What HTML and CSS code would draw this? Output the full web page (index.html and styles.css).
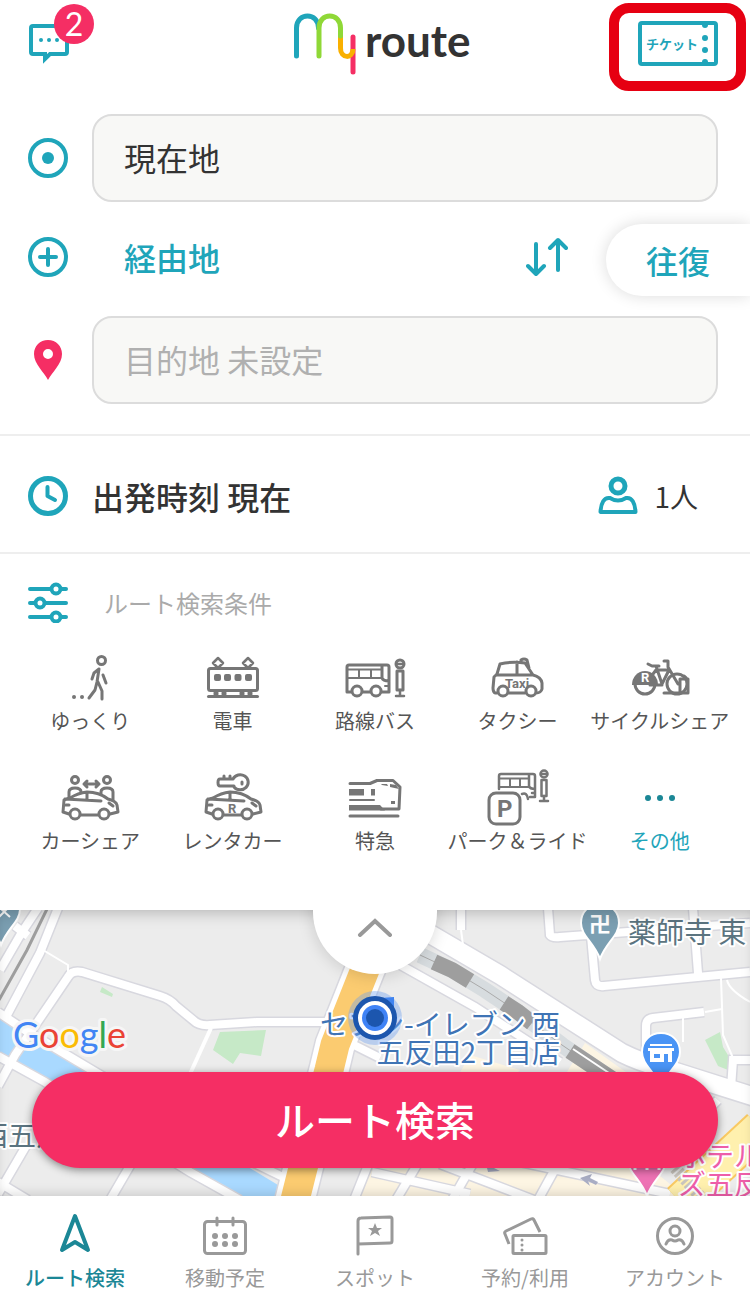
FILE: index.html
```
<!DOCTYPE html>
<html lang="ja">
<head>
  <meta charset="UTF-8" />
  <meta name="viewport" content="width=device-width" />
  <title>my route</title>
  <link rel="stylesheet" href="styles.css">
</head>
<body>
  <header class="header">
    <button class="message-btn" aria-label="お知らせ">
      <svg width="40" height="40" viewBox="0 0 40 40" fill="none" stroke="currentColor" stroke-width="4">
        <path d="M4 2H36Q38 2 38 4V28Q38 30 36 30H21L16 35V30H4Q2 30 2 28V4Q2 2 4 2Z" />
        <path d="M12 16h.01M20 16h.01M28 16h.01" stroke-linecap="round" />
      </svg>
      <span class="badge">2</span>
    </button>

    <svg class="logo" width="180" height="66" viewBox="0 0 180 66" role="img" aria-label="my route">
      <g fill="none" stroke-width="5" stroke-linecap="round">
        <path stroke="#f52e64" d="M60 26V61" />
        <path stroke="#f9b000" stroke-linecap="butt" d="M47.5 25V37C47.5 48 60 48 60 38" />
        <path stroke="#1fa5ba" d="M3.500 45V17C3.500 1 25.500 1 25.500 17" />
        <path stroke="#8fd837" d="M26 45V17C26 1 47.500 1 47.500 17V25" />
      </g>
      <text class="logo-text" x="72" y="46">route</text>
    </svg>

    <button class="ticket-btn" aria-label="チケット">
      <svg width="80" height="46" viewBox="0 0 80 46">
        <rect x="2" y="2" width="76" height="41" rx="2" fill="none" stroke="currentColor" stroke-width="4" />
        <g fill="currentColor">
          <circle cx="67" cy="4" r="3" /><circle cx="67" cy="17" r="3" />
          <circle cx="67" cy="29" r="3" /><circle cx="67" cy="41" r="3" />
        </g>
        <text class="ticket-text" x="8" y="28">チケット</text>
      </svg>
    </button>
  </header>

  <main class="main">
    <form class="route-form">
      <div class="form-row">
        <label for="from" aria-label="出発地">
          <svg class="icon" width="40" height="40" viewBox="0 0 40 40">
            <circle cx="20" cy="20" r="18" fill="none" stroke="currentColor" stroke-width="4" />
            <circle cx="20" cy="20" r="6" fill="currentColor" />
          </svg>
        </label>
        <input class="place" id="from" type="text" value="現在地">
      </div>

      <div class="form-row via-row">
        <svg class="icon" width="40" height="40" viewBox="0 0 40 40" fill="none" stroke="currentColor" stroke-width="4">
          <circle cx="20" cy="20" r="18" />
          <path d="M20 12V28M12 20H28" stroke-linecap="round" />
        </svg>
        <button class="via-btn" type="button">経由地</button>
        <button class="swap-btn" type="button" aria-label="入れ替え">
          <svg width="42" height="40" viewBox="0 0 42 40" fill="none" stroke="currentColor" stroke-width="4" stroke-linecap="round" stroke-linejoin="round">
            <path d="M10 7V36M2 29L10 37L18 29" />
            <path d="M32 33V4M24 11L32 3L40 11" />
          </svg>
        </button>
        <button class="round-btn" type="button">往復</button>
      </div>

      <div class="form-row">
        <label for="to" aria-label="目的地">
          <svg class="icon" width="40" height="40" viewBox="0 0 40 40">
            <path fill="#f52e64" fill-rule="evenodd" d="M20 0C12 0 6 6 6 14C6 24 16 32 20 40C24 32 34 24 34 14C34 6 28 0 20 0ZM20 9a5 5 0 1 1 0 10a5 5 0 1 1 0-10Z" />
          </svg>
        </label>
        <input class="place" id="to" type="text" placeholder="目的地 未設定">
      </div>
    </form>

    <div class="time-row">
      <button class="time-btn">
        <svg class="icon" width="40" height="40" viewBox="0 0 40 40" fill="none" stroke="currentColor" stroke-width="5">
          <circle cx="20" cy="20" r="17.5" />
          <path d="M19.5 11V20L27 24" stroke-width="4" stroke-linecap="round" stroke-linejoin="round" />
        </svg>
        出発時刻 現在
      </button>
      <button class="people-btn">
        <svg class="icon" width="40" height="40" viewBox="0 0 40 40" fill="none" stroke="currentColor" stroke-width="4">
          <circle cx="20" cy="10" r="7" stroke-width="5" />
          <path d="M2.5 36H37.5C37 27 34 21 28 22Q20 27 12 22C6 21 3 27 2.5 36Z" stroke-linejoin="round" />
        </svg>
        1人
      </button>
    </div>

    <section class="conditions">
      <h2 class="conditions-title">
        <svg class="icon" width="40" height="42" viewBox="0 0 40 42" stroke="currentColor" stroke-width="4" stroke-linecap="round">
          <path d="M2 8H38M2 22H38M2 36H38" />
          <g fill="#fff"><circle cx="28" cy="8" r="4.5" /><circle cx="12" cy="22" r="4.5" /><circle cx="28" cy="36" r="4.5" /></g>
        </svg>
        ルート検索条件
      </h2>

      <div class="modes">
        <button class="mode">
          <svg viewBox="0 0 60 56">
            <circle cx="41.5" cy="10.5" r="4" />
            <path d="M39 19L37 32L35 40L29 48M38 32L42 41V49M39 19L34 23L32 29M43 25L46 33" />
            <path d="M14 47h.01M22 47h.01" stroke-width="4" />
          </svg>
          ゆっくり
        </button>
        <button class="mode">
          <svg viewBox="0 0 60 56">
            <rect x="5.5" y="18.5" width="49" height="22" rx="2" />
            <path d="M5.5 46.5H54.5" />
            <path d="M13 43V44M21 43V44M39 43V44M47 43V44" stroke-width="5" />
            <path d="M15 8L20 13L15 18L10 13ZM45 8L50 13L45 18L40 13Z" stroke-width="2.5" />
            <g class="solid"><rect x="11" y="24" width="7" height="7" rx="2" /><rect x="21" y="24" width="7" height="7" rx="2" /><rect x="31.5" y="24" width="7" height="7" rx="2" /><rect x="42" y="24" width="7" height="7" rx="2" /></g>
          </svg>
          電車
        </button>
        <button class="mode">
          <svg viewBox="0 0 60 56">
            <path d="M6 42H2V17Q2 15 4 15H42Q44 15 44 17V42H37M18 42H25M37 15V28Q38 31 44 31" />
            <path d="M2 19.5H37M2 28H37M14 20V28M26 20V28M40 36H44" stroke-width="2" />
            <circle cx="12" cy="41" r="5" /><circle cx="31" cy="41" r="5" />
            <circle cx="55" cy="14" r="4" />
            <path d="M52 14H58M55 40V46M51 46H59" stroke-width="2.5" />
            <rect x="52" y="21" width="6" height="19" />
          </svg>
          路線バス
        </button>
        <button class="mode">
          <svg viewBox="0 0 60 56">
            <path d="M10 43H8Q6 42 6 38L7 27L10 24L13 14Q25 11 38 13L46 25Q54 27 55 33V39Q54 43 49 43M21 43H38M9 25H46M30 12V25M34 12V10Q37 8 40 10L42 18" />
            <circle cx="16" cy="41" r="5" /><circle cx="44" cy="41" r="5" />
            <text x="18" y="38" font-size="13">Taxi</text>
          </svg>
          タクシー
        </button>
        <button class="mode">
          <svg viewBox="0 0 60 56">
            <circle cx="15" cy="34" r="10" />
            <circle cx="47" cy="34" r="10" />
            <path class="solid" d="M2 35A13 14 0 0 1 28 35Z" />
            <path d="M18 14L22 16H29M34 11H38V17L48 34M26 16L32 34L39 20H26L23 24M20 35H32M34 43H58M50 43V29H58V43M54 26Q58 29 58 32" />
            <text class="knock" x="11" y="32" font-size="13">R</text>
          </svg>
          サイクルシェア
        </button>

        <button class="mode">
          <svg viewBox="0 0 60 56">
            <path d="M9 27V22Q9 18 15 18Q21 18 21 22M41 24V22Q41 18 47 18Q53 18 53 22V30" />
            <circle cx="15" cy="10" r="3.5" /><circle cx="47" cy="10" r="3.5" />
            <path d="M24 14H39M27 11L24 14L27 17M36 11L39 14L36 17" />
            <path class="car" d="M9 44L3 42L4 30L10 28Q18 23 27 22Q39 22 48 29Q56 31 57 35L58 42L50 44M21 45H38M5 29L41 31M27 22V30M6 35H9M49 33L53 36" />
            <circle cx="15" cy="44" r="5" /><circle cx="44" cy="44" r="5" />
          </svg>
          カーシェア
        </button>
        <button class="mode">
          <svg viewBox="0 0 60 56">
            <path d="M30 9H27V6M21 9V6M27 9H17Q15 9 15 12.500Q15 16 17 16H31M30 9A8 7.500 0 1 1 31 17M39 12V14" />
            <path class="car" d="M9 44L3 42L4 30L10 28Q18 23 27 22Q39 22 48 29Q56 31 57 35L58 42L50 44M21 45H38M5 29L41 31M27 22V30M6 35H9M49 33L53 36" />
            <circle cx="15" cy="44" r="5" /><circle cx="44" cy="44" r="5" />
            <text x="25" y="43" font-size="13">R</text>
          </svg>
          レンタカー
        </button>
        <button class="mode">
          <svg viewBox="0 0 60 56">
            <path d="M5 13.5H25L32 10.5H48L55 17L54 39H36" />
            <path d="M5 30H29" stroke-width="2" />
            <path d="M5 46H53" />
            <path class="solid" d="M4 19H19V25.5H4ZM26 19H30V25.5H26ZM4 35H35L40 40.5H4ZM36 14H42L43 16L37 15ZM45 14L51 15L54 19L45 17ZM46 31H50V34H46Z" />
          </svg>
          特急
        </button>
        <button class="mode">
          <svg viewBox="0 0 60 56">
            <path d="M12 19V6Q12 4 14 4H46Q48 4 48 6V27H43M42 4V16Q43 19 48 19M35 24Q40 22 41 29M45 23H48" stroke-width="2.5" />
            <path d="M12 8.5H42M12 17H42M23 9V17M33 9V17" stroke-width="2" />
            <g stroke-width="2.5"><circle cx="57" cy="4" r="3.5" /><path d="M54 4H60M57 26V31M53 31H61" /><rect x="54.5" y="10" width="5" height="16" /></g>
            <rect x="2" y="23" width="31" height="31" rx="7" fill="#fff" />
            <text x="10" y="47" font-size="24">P</text>
          </svg>
          パーク＆ライド
        </button>
        <button class="mode mode-more">
          <svg viewBox="0 0 60 56">
            <path d="M18 28h.01M30 28h.01M42 28h.01" stroke-width="6" />
          </svg>
          その他
        </button>
      </div>
    </section>

    <section class="map">
      <svg class="map-canvas" viewBox="0 0 750 286" preserveAspectRatio="xMidYMid slice" fill="none">
        <defs>
          <g id="streets">
            <path d="M38-2L22 22L0 60M15 16L28 26M58-2L40 43L7 105" />
            <path d="M-2 176L15 145L68 67Q72 60 82 62L160 86Q170 89 176 96L193 110Q199 116 210 115L257 112H335" />
            <path d="M-2 102L25 120L97 163L240 246L285 268M-2 146L45 172L190 262L240 290" />
            <path d="M26 236L-2 284M131 254L110 290M-2 272L28 290M370 250L354 290M352 134L380 148" />
            <path d="M395 52L475 97L560 152" />
            <path d="M461-2V20M548-2L550 25Q552 28 560 27L750 13M591 26L595 70Q596 77 604 76L750 62M693-2L698 63" />
            <path d="M704 102L653 108Q646 109 646 116V140M750 150H733L731 178M718 190L690 218" />
            <path d="M372 262L470 284M420 250L396 290M475 250L452 290M440 254L560 300M560 250L538 290M520 252L670 284" />
          </g>
          <g id="avenue"><path d="M385-8L430 24L500 65L575 113L622 143Q640 152 660 157L755 187" /></g>
          <g id="orange-road"><path d="M386 8L364 62L335 135L329 160L303 258L294 294" /></g>
          <g id="rail"><path d="M420 45L452 60L485 80L518 102L562 135L612 169" /></g>
          <path id="pin" d="M0-20C-11-20-19-12-19-1C-19 12-6 18 0 35C6 18 19 12 19-1C19-12 11-20 0-20Z" />
        </defs>

        <rect width="750" height="286" fill="#ececec" />
        <path fill="#fdf5e3" d="M360 250H640L690 290H360ZM470 145L520 160L500 180H450ZM585 133L630 165H565Z" />
        <path fill="#c6e9c7" d="M220 122L266 120L261 146L240 143L233 154L213 140ZM102 77L113 84L112 87L100 82ZM705 130L720 122L723 137L731 150L728 160L718 156Z" />
        <path fill="#a9d9ff" d="M-1 108L95 165L278 275L277 290H240L55 176L-1 142Z" />

        <use href="#streets" stroke="#d8d8df" stroke-width="11" />
        <use href="#avenue" stroke="#d8d8df" stroke-width="21" />
        <use href="#orange-road" stroke="#d8d8df" stroke-width="42" />
        <use href="#streets" stroke="#fff" stroke-width="8" />
        <use href="#avenue" stroke="#fff" stroke-width="18" />
        <g stroke="#fff" stroke-width="2">
          <path d="M43 40L68 55V64M461 20L463 35M705 102L722 99M721 68L723 125L733 148M727 70Q729 80 750 92M683 106V132" />
          <path d="M211 118L190 164" stroke-width="4" />
        </g>
        <use href="#orange-road" stroke="#fff" stroke-width="39" />
        <use href="#orange-road" stroke="#fbcb70" stroke-width="29" />

        <path d="M47-1L27 40L-1 90" stroke="#9e9e9e" stroke-width="3" />
        <use href="#rail" stroke="#d7dcdf" stroke-width="16" />
        <use href="#rail" stroke="#aaa" stroke-width="1" />
        <path d="M434 52L452 60L470 71M504 93L518 102L532 113M570 141L612 169" stroke="#9e9e9e" stroke-width="16" />
        <path d="M573 139L612 165" stroke="#fff" stroke-width="2" />
        <path d="M760 218L680 292" stroke="#f9c962" stroke-width="38" />
        <path d="M760 218L680 292" stroke="#fff0ae" stroke-width="34" />
        <path d="M675 258L705 292" stroke="#c9c4bd" stroke-width="12" stroke-dasharray="3 2" />
        <path fill="#a9adc4" d="M580 268L592 264L590 268L598 272L596 275L588 271L590 276ZM486 254L500 261L488 262Z" />

        <g stroke="#fff" stroke-width="2">
          <use href="#pin" x="1" y="0" fill="#7b9fb2" />
          <use href="#pin" x="600" y="14" fill="#7b9fb2" />
          <use href="#pin" x="661" y="143" fill="#4a94f5" />
          <use href="#pin" x="647" y="251" fill="#ee72b4" />
        </g>
        <path d="M-2 8L8-2M0-2L10 7" stroke="#fff" stroke-width="2" />
        <text class="pin-text" x="600" y="22">卍</text>
        <g fill="#fff">
          <path d="M650 134H672V136H650ZM648 138H674V141H648Z" />
          <path fill-rule="evenodd" d="M650 141H672V152H650ZM654 144V148H660V144ZM664 144V152H668V144Z" />
        </g>
        <path d="M635 255V260M647 258V260M659 255V260" stroke="#fff" stroke-width="3" />

        <g class="map-label">
          <text x="628" y="33" fill="#5b7480">薬師寺 東</text>
          <text x="-20" y="236" fill="#5b7480">西五反田</text>
          <text class="end" x="560" y="125" fill="#3f74b5">セブン-イレブン 西</text>
          <text class="end" x="560" y="153" fill="#3f74b5">五反田2丁目店</text>
          <text x="678" y="257" fill="#ee5ea9">ホテル</text>
          <text x="678" y="285" fill="#ee5ea9">ズ五反田</text>
        </g>

        <circle cx="375" cy="108" r="27" fill="#6fa1ef" fill-opacity=".4" />
        <path d="M381 88L394 87L394 100Z" fill="#3f83f0" />
        <circle cx="375" cy="108" r="19.5" fill="#fff" stroke="#1c56ae" stroke-width="5" />
        <circle cx="375" cy="108" r="13" fill="#3f83f6" />
        <circle cx="375" cy="108" r="9" fill="#1c56ae" />

        <text class="google" x="13" y="138"><tspan fill="#4285f4">G</tspan><tspan fill="#ea4335">o</tspan><tspan fill="#fbbc05">o</tspan><tspan fill="#4285f4">g</tspan><tspan fill="#34a853">l</tspan><tspan fill="#ea4335">e</tspan></text>
      </svg>

      <button class="handle" aria-label="閉じる">
        <svg width="36" height="20" viewBox="0 0 36 20" fill="none" stroke="#999" stroke-width="4" stroke-linecap="round">
          <path d="M3 18L18 4L33 18" />
        </svg>
      </button>
      <button class="search-btn">ルート検索</button>
    </section>
  </main>

  <nav class="tabs">
    <a class="tab active" href="#search">
      <svg viewBox="0 0 48 44"><path d="M24 4L37 38L24 30L11 38Z" stroke-width="4" /></svg>
      ルート検索
    </a>
    <a class="tab" href="#plan">
      <svg viewBox="0 0 48 44">
        <rect x="3.5" y="9.5" width="41" height="32" rx="3" />
        <path d="M16 6V13M32 6V13" />
        <path d="M14 24h.01M24 24h.01M34 24h.01M14 32h.01M24 32h.01M34 32h.01" stroke-width="6" />
      </svg>
      移動予定
    </a>
    <a class="tab" href="#spot">
      <svg viewBox="0 0 48 44">
        <path d="M7 42V9Q7 6 10 6L39 5Q41 5 41 7V29Q41 31 39 31L7 32" />
        <path d="M24 11L26 16H31L27 19L29 24L24 21L19 24L21 19L17 16H22Z" fill="currentColor" stroke="none" />
      </svg>
      スポット
    </a>
    <a class="tab" href="#ticket">
      <svg viewBox="0 0 48 44">
        <path d="M8 32L4 22Q3 20 5 19L30 7Q32 6 33 8L39 20" stroke-linecap="butt" />
        <rect x="12" y="23.5" width="33" height="18" rx="1" />
        <path d="M21 28h.01M21 33h.01M21 38h.01" />
      </svg>
      予約/利用
    </a>
    <a class="tab" href="#account">
      <svg viewBox="0 0 48 44">
        <circle cx="24" cy="24" r="17.5" />
        <circle cx="24" cy="19" r="5" />
        <path d="M15 32Q17 27 21 28Q24 30 27 28Q31 27 33 32" />
      </svg>
      アカウント
    </a>
  </nav>
</body>
</html>
```

FILE: styles.css
```
* {
  box-sizing: border-box;
}

body {
  margin: 0;
  min-height: 100vh;
  display: flex;
  flex-direction: column;
  font-family: "Noto Sans CJK JP", sans-serif;
  color: #333;
  background: #fff;
}

button {
  padding: 0;
  border: none;
  background: none;
  font: inherit;
  color: inherit;
  cursor: pointer;
}

svg {
  display: block;
  flex: none;
}

.icon {
  color: #1fa5ba;
}

/* header */
.header {
  display: grid;
  grid-template-columns: 1fr auto 1fr;
  align-items: start;
  height: 114px;
  padding: 3px 4px 0 19px;
}

.message-btn {
  position: relative;
  justify-self: start;
  margin-top: 21px;
  margin-left: 10px;
  color: #1fa5ba;
}

.badge {
  position: absolute;
  top: -20px;
  left: 25px;
  width: 40px;
  height: 40px;
  border-radius: 50%;
  background: #f52e64;
  color: #fff;
  font-family: Lato, sans-serif;
  font-size: 32px;
  line-height: 40px;
  text-align: center;
}

.logo {
  margin-top: 8px;
}

.logo-text {
  font-family: Lato, sans-serif;
  font-size: 44px;
  font-weight: bold;
  fill: #333;
}

.ticket-btn {
  justify-self: end;
  display: flex;
  justify-content: center;
  width: 137px;
  height: 88px;
  padding-top: 8px;
  border: 10px solid #e60012;
  border-radius: 20px;
  color: #1fa5ba;
}

.ticket-text {
  font-size: 13px;
  font-weight: bold;
  fill: currentColor;
}

/* route form */
.main {
  flex: 1;
  display: flex;
  flex-direction: column;
}

.route-form {
  padding: 0 32px 30px 28px;
  border-bottom: 2px solid #eee;
}

.form-row {
  display: flex;
  align-items: center;
  gap: 24px;
}

.place {
  flex: 1;
  min-width: 0;
  height: 88px;
  padding: 0 30px 2px;
  border: 2px solid #dcdcdc;
  border-radius: 20px;
  background: #f8f8f6;
  font: inherit;
  font-size: 32px;
  color: #333;
}

.place::placeholder {
  color: #b0b0b0;
  opacity: 1;
}

.via-row {
  height: 114px;
  margin-right: -32px;
  padding-bottom: 4px;
}

.via-btn {
  margin-left: 32px;
  font-size: 32px;
  font-weight: 500;
  color: #1fa5ba;
}

.swap-btn {
  margin-left: auto;
  color: #1fa5ba;
}

.round-btn {
  width: 144px;
  height: 72px;
  margin-top: 6px;
  margin-left: 14px;
  border-radius: 36px 0 0 36px;
  background: #fff;
  box-shadow: 0 0 16px rgba(0, 0, 0, 0.14);
  font-size: 32px;
  font-weight: 500;
  color: #1fa5ba;
}

/* departure time and people */
.time-row {
  display: flex;
  justify-content: space-between;
  align-items: center;
  height: 118px;
  padding: 4px 52px 0 28px;
  border-bottom: 2px solid #eee;
}

.time-btn,
.people-btn {
  display: flex;
  align-items: center;
  gap: 24px;
  font-size: 32px;
  font-weight: 500;
}

.people-btn {
  gap: 16px;
  font-size: 28px;
  font-weight: normal;
}

/* search conditions */
.conditions {
  padding-bottom: 54px;
}

.conditions-title {
  display: flex;
  align-items: center;
  gap: 36px;
  height: 96px;
  margin: 0;
  padding-left: 28px;
  font-size: 24px;
  font-weight: normal;
  color: #aaa;
}

.modes {
  display: grid;
  grid-template-columns: repeat(5, 1fr);
  row-gap: 34px;
  padding: 0 19px;
}

.mode {
  display: flex;
  flex-direction: column;
  align-items: center;
  font-size: 20px;
  line-height: 30px;
  color: #555;
  white-space: nowrap;
}

.mode svg {
  width: 60px;
  height: 56px;
  overflow: visible;
  color: #767676;
  fill: none;
  stroke: currentColor;
  stroke-width: 3;
  stroke-linecap: round;
  stroke-linejoin: round;
}

.mode circle {
  fill: #fff;
}

.mode .solid {
  fill: currentColor;
  stroke: none;
}

.mode text {
  font-family: Roboto, sans-serif;
  font-weight: bold;
  fill: currentColor;
  stroke: none;
}

.mode .knock {
  fill: #fff;
}

.mode .car {
  fill: #fff;
}

.mode-more {
  color: #1fa5ba;
}

.mode-more svg {
  color: #1b8796;
}

/* map */
.map {
  position: relative;
  flex: 1;
  min-height: 286px;
  overflow: hidden;
}

.map-canvas {
  position: absolute;
  width: 100%;
  height: 100%;
}

.map::after {
  content: "";
  position: absolute;
  inset: 0;
  pointer-events: none;
  box-shadow: inset 0 10px 16px -8px rgba(0, 0, 0, 0.25), inset 0 -10px 12px -8px rgba(0, 0, 0, 0.15);
}

.map-label {
  font-size: 28px;
  stroke: #fff;
  stroke-width: 4px;
  stroke-linejoin: round;
  paint-order: stroke;
}

.map-label .end {
  text-anchor: end;
}

.pin-text {
  font-size: 22px;
  font-weight: bold;
  text-anchor: middle;
  fill: #fff;
}

.google {
  font-family: Lato, sans-serif;
  font-size: 36px;
  stroke: #f6f6f6;
  stroke-width: 6px;
  stroke-linejoin: round;
  paint-order: stroke;
}

.handle {
  position: absolute;
  z-index: 1;
  top: -60px;
  left: 50%;
  width: 124px;
  height: 124px;
  margin-left: -62px;
  padding-top: 30px;
  border-radius: 50%;
  background: #fff;
  box-shadow: 0 2px 16px rgba(0, 0, 0, 0.15);
}

.handle svg {
  margin: 0 auto;
}

.search-btn {
  position: absolute;
  z-index: 1;
  right: 32px;
  bottom: 28px;
  left: 32px;
  height: 96px;
  padding-bottom: 2px;
  border-radius: 48px;
  background: #f52e64;
  box-shadow: 0 2px 8px rgba(0, 0, 0, 0.45);
  font-size: 40px;
  font-weight: 500;
  color: #fff;
}

/* bottom tabs */
.tabs {
  display: grid;
  grid-template-columns: repeat(5, 1fr);
  height: 98px;
  padding-top: 16px;
  background: #fff;
}

.tab {
  display: flex;
  flex-direction: column;
  align-items: center;
  gap: 8px;
  font-size: 20px;
  line-height: 28px;
  color: #999;
  text-decoration: none;
  white-space: nowrap;
}

.tab svg {
  width: 48px;
  height: 44px;
  fill: none;
  stroke: currentColor;
  stroke-width: 3;
  stroke-linecap: round;
  stroke-linejoin: round;
}

.tab.active {
  font-weight: 500;
  color: #1b8796;
}
```
